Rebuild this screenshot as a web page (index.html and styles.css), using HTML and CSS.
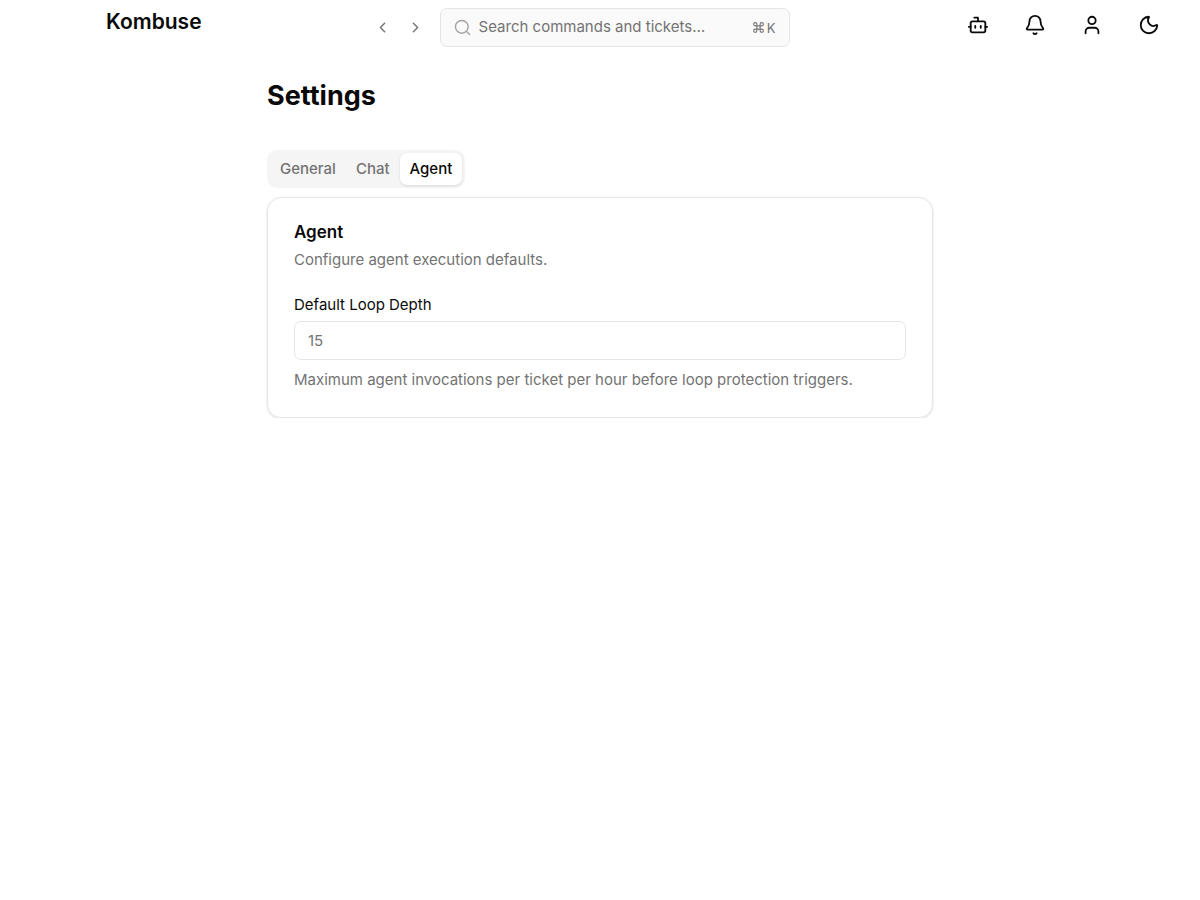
FILE: index.html
```html
<!DOCTYPE html>
<html lang="en">
<head>
<meta charset="utf-8">
<title>Settings - Kombuse</title>
<meta name="viewport" content="width=device-width, initial-scale=1">
<link rel="stylesheet" href="styles.css">
</head>
<body>
<header class="topbar">
  <a class="brand" href="#">Kombuse</a>
  <div class="center">
    <button class="nav-button" type="button" aria-label="Back"><svg class="icon-small" viewBox="0 0 24 24"><path d="m15 18-6-6 6-6"/></svg></button>
    <button class="nav-button" type="button" aria-label="Forward"><svg class="icon-small" viewBox="0 0 24 24"><path d="m9 18 6-6-6-6"/></svg></button>
    <button class="search" type="button">
      <svg class="search-icon" viewBox="0 0 24 24"><circle cx="11" cy="11" r="9"/><path d="m22 22-4.6-4.6"/></svg>
      <span class="search-text">Search commands and tickets…</span>
      <kbd class="shortcut"><svg class="command-icon" viewBox="0 0 24 24"><path d="M15 6v12a3 3 0 1 0 3-3H6a3 3 0 1 0 3 3V6a3 3 0 1 0-3 3h12a3 3 0 1 0-3-3"/></svg>K</kbd>
    </button>
  </div>
  <div class="actions">
    <button class="action" type="button" aria-label="Agents"><svg class="icon" viewBox="0 0 24 24"><path d="M12 8V4H8"/><rect width="16" height="12" x="4" y="8" rx="2"/><path d="M2 14h2M20 14h2M15 13v2M9 13v2"/></svg></button>
    <button class="action" type="button" aria-label="Notifications"><svg class="icon" viewBox="0 0 24 24"><path d="M10.268 21a2 2 0 0 0 3.464 0"/><path d="M3.262 15.326A1 1 0 0 0 4 17h16a1 1 0 0 0 .74-1.673C19.41 13.956 18 12.499 18 8A6 6 0 0 0 6 8c0 4.499-1.411 5.956-2.738 7.326"/></svg></button>
    <button class="action" type="button" aria-label="Profile"><svg class="icon" viewBox="0 0 24 24"><path d="M19 21v-2a4 4 0 0 0-4-4H9a4 4 0 0 0-4 4v2"/><circle cx="12" cy="7" r="4"/></svg></button>
    <button class="action" type="button" aria-label="Toggle theme"><svg class="icon" viewBox="0 0 24 24"><path d="M20.985 12.486a9 9 0 1 1-9.473-9.472c.405-.022.617.46.402.803a6 6 0 0 0 8.268 8.268c.344-.215.825-.004.803.401"/></svg></button>
  </div>
</header>
<main class="page">
  <h1 class="title">Settings</h1>
  <div class="tabs" role="tablist">
    <button class="tab" type="button" role="tab" aria-selected="false">General</button>
    <button class="tab" type="button" role="tab" aria-selected="false">Chat</button>
    <button class="tab tab-active" type="button" role="tab" aria-selected="true">Agent</button>
  </div>
  <section class="card">
    <h2 class="card-title">Agent</h2>
    <p class="muted">Configure agent execution defaults.</p>
    <div class="field">
      <label class="label" for="depth">Default Loop Depth</label>
      <input class="input" id="depth" type="text" inputmode="numeric" placeholder="15" aria-describedby="depth-help">
      <p class="muted" id="depth-help">Maximum agent invocations per ticket per hour before loop protection triggers.</p>
    </div>
  </section>
</main>
</body>
</html>
```
FILE: styles.css
```css
* { box-sizing: border-box; }

body {
  margin: 0;
  background: #fff;
  color: #0a0a0a;
  font-family: Inter, "Liberation Sans", sans-serif;
  font-size: 15px;
  line-height: 22px;
}

button, input { font: inherit; color: inherit; }
button { border: 0; background: none; padding: 0; cursor: pointer; }
h1, h2, p { margin: 0; }
svg {
  fill: none;
  stroke: currentColor;
  stroke-width: 2;
  stroke-linecap: round;
  stroke-linejoin: round;
}

.topbar {
  display: grid;
  grid-template-columns: 13fr auto 19fr;
  align-items: start;
  padding: 8px 31px 0 106px;
}
.brand {
  color: inherit;
  text-decoration: none;
  font-size: 21px;
  line-height: 28px;
  font-weight: 600;
}
.center { display: flex; align-items: center; }
.nav-button {
  display: grid;
  place-items: center;
  width: 33px;
  height: 33px;
  color: #737373;
}
.icon-small { width: 17px; height: 17px; }
.search {
  display: flex;
  align-items: center;
  gap: 8px;
  width: 350px;
  height: 39px;
  margin-left: 8px;
  padding: 0 13px;
  border: 1px solid #e5e5e5;
  border-radius: 7px;
  background: #fafafa;
  color: #737373;
  text-align: left;
}
.search-icon { width: 17px; height: 17px; color: #a3a3a3; }
.search-text { flex: 1; padding-bottom: 1px; }
.shortcut {
  display: flex;
  align-items: center;
  gap: 2px;
  font: inherit;
  font-size: 13px;
}
.command-icon { width: 13px; height: 13px; }
.actions { display: flex; justify-content: flex-end; gap: 16px; }
.action { display: grid; place-items: center; width: 41px; height: 34px; }
.icon { width: 22px; height: 22px; }

.page { max-width: 666px; margin: 0 auto; padding-top: 32px; }
.title { font-size: 27px; line-height: 34px; font-weight: 700; }
.tabs {
  display: inline-flex;
  margin-top: 37px;
  padding: 3px;
  border-radius: 10px;
  background: #f5f5f5;
  color: #737373;
}
.tab { height: 32px; padding: 0 10px; border-radius: 7px; font-weight: 500; }
.tab-active {
  background: #fff;
  color: #0a0a0a;
  box-shadow: 0 1px 3px rgb(0 0 0 / 10%), 0 1px 2px -1px rgb(0 0 0 / 10%);
}
.card {
  margin-top: 9px;
  padding: 23px 26px 26px;
  border: 1px solid #e5e5e5;
  border-radius: 14px;
  box-shadow: 0 1px 3px rgb(0 0 0 / 10%), 0 1px 2px -1px rgb(0 0 0 / 10%);
}
.card-title { font-size: 17px; line-height: 22px; font-weight: 600; }
.card-title + .muted { margin-top: 6px; }
.muted { color: #737373; }
.field { display: grid; gap: 5px; margin-top: 23px; }
.label { justify-self: start; }
.input {
  width: 100%;
  height: 39px;
  padding: 0 13px;
  border: 1px solid #e5e5e5;
  border-radius: 7px;
  background: #fff;
}
.input::placeholder { color: #737373; opacity: 1; }
.input + .muted { margin-top: 4px; }
```
